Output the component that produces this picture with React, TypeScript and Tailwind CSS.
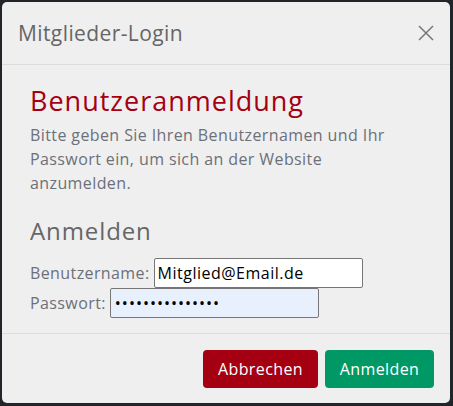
import React from 'react'

const font = { fontFamily: '"Open Sans", "Noto Sans", sans-serif' }

export default function App() {
    return (
        <div className="w-[453px] h-[406px] bg-[#212529] pt-[2px] pl-[2px] tracking-[0.4px]" style={font}>
            <div className="w-[448px] h-[401px] bg-[#efefef] rounded-[5px] flex flex-col overflow-hidden">
                {/* Header */}
                <div className="h-[63px] shrink-0 flex items-center justify-between pl-[16px] pr-[16px] border-b border-[#dcdcdc]">
                    <h5 className="text-[21px] text-[#666666] leading-none">Mitglieder-Login</h5>
                    <button className="w-[16px] h-[16px] text-[#777777]">
                        <svg viewBox="0 0 16 16" className="w-[16px] h-[16px]" fill="none" stroke="currentColor" strokeWidth="1.5">
                            <path d="M1 1 L15 15 M15 1 L1 15" />
                        </svg>
                    </button>
                </div>

                {/* Body */}
                <div className="flex-1 px-[28px] pt-[19px]">
                    <h2 className="text-[27px] leading-[33px] tracking-[1px] text-[#a50011]">Benutzeranmeldung</h2>
                    <p className="mt-[6px] text-[16px] leading-[24px] text-[#6c7079]">
                        Bitte geben Sie Ihren Benutzernamen und Ihr<br />
                        Passwort ein, um sich an der Website<br />
                        anzumelden.
                    </p>
                    <h3 className="mt-[21px] text-[24px] leading-[30px] tracking-[0.9px] text-[#666666]">Anmelden</h3>
                    <div className="mt-[12px] flex flex-col text-[16px] text-[#6c7079]">
                        <div className="flex items-center gap-[4px] h-[30px]">
                            <label>Benutzername:</label>
                            <input
                                type="text"
                                defaultValue="Mitglied@Email.de"
                                className="w-[209px] h-[30px] bg-white border border-[#767676] rounded-[2px] px-[3px] text-[16px] tracking-[0.5px] text-black outline-none"
                                style={font}
                            />
                        </div>
                        <div className="flex items-center gap-[4px] h-[30px]">
                            <label>Passwort:</label>
                            <input
                                type="password"
                                defaultValue="geheimespasswor"
                                className="w-[209px] h-[30px] bg-[#e8f0fe] border border-[#767676] rounded-[2px] px-[4px] text-[16px] tracking-[1px] text-black outline-none"
                            />
                        </div>
                    </div>
                </div>

                {/* Footer */}
                <div className="h-[70px] shrink-0 border-t border-[#dcdcdc] flex items-center justify-end gap-[7px] pr-[16px]">
                    <button className="h-[38px] w-[115px] rounded-[4px] bg-[#a50011] text-white text-[16px]">Abbrechen</button>
                    <button className="h-[38px] w-[109px] rounded-[4px] bg-[#009966] text-white text-[16px]">Anmelden</button>
                </div>
            </div>
        </div>
    )
}
